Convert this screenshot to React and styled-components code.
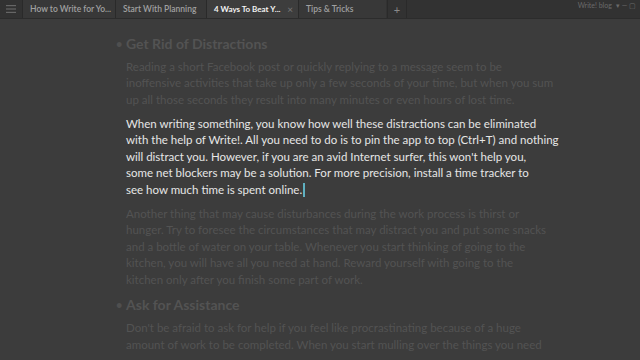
import React from "react";
import styled, { createGlobalStyle } from "styled-components";

const Global = createGlobalStyle`
  html, body { margin: 0; padding: 0; background: #3c3c3c; }
  body { width: 640px; height: 360px; overflow: hidden; font-family: Lato, "Open Sans", sans-serif; }
`;

const Page = styled.div`
  width: 640px;
  height: 360px;
  display: flex;
  flex-direction: column;
  background: #3c3c3c;
  overflow: hidden;
`;

const TabBar = styled.div`
  height: 18px;
  flex: none;
  display: flex;
  align-items: stretch;
  background: #323232;
  border-bottom: 1px solid #2c2c2c;
`;

const Menu = styled.div`
  width: 22px;
  display: flex;
  align-items: center;
  justify-content: center;
`;

const Tab = styled.div`
  width: ${(p) => p.$w}px;
  box-sizing: border-box;
  display: flex;
  align-items: center;
  justify-content: space-between;
  padding: 0 5px 0 7px;
  background: ${(p) => (p.$active ? "#3d3d3d" : "#383838")};
  border-left: 1px solid #2a2a2a;
  color: ${(p) => (p.$active ? "#f2f2f2" : "#a0a0a0")};
  font-family: Lato, sans-serif;
  font-size: ${(p) => (p.$active ? 8 : 8.5)}px;
  font-weight: ${(p) => (p.$active ? 700 : 600)};
  white-space: nowrap;
  overflow: hidden;
`;

const Close = styled.span`
  flex: none;
  color: #777;
  font-size: 10px;
  font-weight: 400;
`;

const Plus = styled.div`
  width: 18px;
  margin-left: 1px;
  display: flex;
  align-items: center;
  justify-content: center;
  color: #8a8a8a;
  font-size: 11px;
  border-left: 1px solid #2a2a2a;
  border-right: 1px solid #2a2a2a;
`;

const Spacer = styled.div`
  flex: 1;
`;

const Brand = styled.div`
  display: flex;
  align-items: flex-start;
  gap: 4px;
  padding: 1px 4px 0 0;
  color: #6a6a6a;
  font-size: 7px;
  font-family: Lato, sans-serif;
`;

const Body = styled.div`
  flex: 1;
  padding: 15.5px 0 0 116px;
  font-family: Lato, "Open Sans", sans-serif;
`;

const Heading = styled.div`
  position: relative;
  padding-left: 10px;
  font-size: 14px;
  font-weight: 700;
  line-height: 17px;
  color: #535353;
  margin-bottom: 7.25px;
  &::before {
    content: "•";
    position: absolute;
    left: 0;
    top: 0;
    font-size: 11px;
    color: #4f4f4f;
  }
`;

const Para = styled.div`
  padding-left: 10px;
  font-size: 11.5px;
  line-height: 16.5px;
  color: ${(p) => (p.$active ? "#e6e6e6" : "#535353")};
  margin-bottom: 7.5px;
`;

const Line = styled.div`
  white-space: nowrap;
`;

const Caret = styled.span`
  display: inline-block;
  width: 1.5px;
  height: 14px;
  margin-left: 1px;
  vertical-align: -3px;
  background: #5fb0c0;
`;

const p1 = [
  "Reading a short Facebook post or quickly replying to a message seem to be",
  "inoffensive activities that take up only a few seconds of your time, but when you sum",
  "up all those seconds they result into many minutes or even hours of lost time.",
];
const p2 = [
  "When writing something, you know how well these distractions can be eliminated",
  "with the help of Write!. All you need to do is to pin the app to top (Ctrl+T) and nothing",
  "will distract you. However, if you are an avid Internet surfer, this won't help you,",
  "some net blockers may be a solution. For more precision, install a time tracker to",
];
const p3 = [
  "Another thing that may cause disturbances during the work process is thirst or",
  "hunger. Try to foresee the circumstances that may distract you and put some snacks",
  "and a bottle of water on your table. Whenever you start thinking of going to the",
  "kitchen, you will have all you need at hand. Reward yourself with going to the",
  "kitchen only after you finish some part of work.",
];
const p4 = [
  "Don't be afraid to ask for help if you feel like procrastinating because of a huge",
  "amount of work to be completed. When you start mulling over the things you need",
];

export default function App() {
  return (
    <Page>
      <Global />
      <TabBar>
        <Menu>
          <svg width="10" height="8" viewBox="0 0 10 8">
            <rect x="0" y="0" width="10" height="1.2" fill="#666" />
            <rect x="0" y="3.4" width="10" height="1.2" fill="#666" />
            <rect x="0" y="6.8" width="10" height="1.2" fill="#666" />
          </svg>
        </Menu>
        <Tab $w={93}>How to Write for Yo...</Tab>
        <Tab $w={91}>Start With Planning</Tab>
        <Tab $w={92} $active>
          <span>4 Ways To Beat Y...</span>
          <Close>×</Close>
        </Tab>
        <Tab $w={88}>Tips &amp; Tricks</Tab>
        <Plus>+</Plus>
        <Spacer />
        <Brand>
          <span>Write! blog</span>
          <span>▾ — ▢</span>
        </Brand>
      </TabBar>
      <Body>
        <Heading>Get Rid of Distractions</Heading>
        <Para>
          {p1.map((l) => (
            <Line key={l}>{l}</Line>
          ))}
        </Para>
        <Para $active>
          {p2.map((l) => (
            <Line key={l}>{l}</Line>
          ))}
          <Line>
            see how much time is spent online.<Caret />
          </Line>
        </Para>
        <Para>
          {p3.map((l) => (
            <Line key={l}>{l}</Line>
          ))}
        </Para>
        <Heading>Ask for Assistance</Heading>
        <Para>
          {p4.map((l) => (
            <Line key={l}>{l}</Line>
          ))}
        </Para>
      </Body>
    </Page>
  );
}
